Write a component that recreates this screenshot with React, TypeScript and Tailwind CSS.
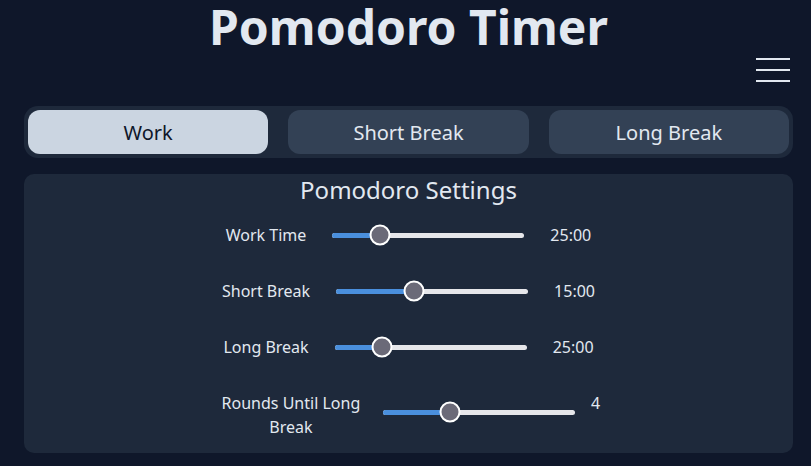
import { useState } from "react";

type Mode = "work" | "short" | "long";

interface SliderRowProps {
  label: string;
  value: string;
  thumb: number; // px from track start to thumb centre
}

function Slider({ thumb }: { thumb: number }) {
  return (
    <div className="relative h-5 w-[192px] shrink-0 flex items-center">
      <div className="h-[5px] w-full rounded-full bg-[#e6e6ea] overflow-hidden">
        <div className="h-full bg-[#4a8fdd]" style={{ width: thumb }} />
      </div>
      <div
        className="absolute top-1/2 h-[21px] w-[21px] -translate-x-1/2 -translate-y-1/2 rounded-full border-2 border-white bg-[#6b6a78]"
        style={{ left: thumb }}
      />
    </div>
  );
}

function SliderRow({ label, value, thumb }: SliderRowProps) {
  return (
    <div className="flex items-center justify-center gap-[26px] leading-6">
      <span>{label}</span>
      <Slider thumb={thumb} />
      <span>{value}</span>
    </div>
  );
}

export default function App() {
  const [mode, setMode] = useState<Mode>("work");

  const tabs: { id: Mode; label: string }[] = [
    { id: "work", label: "Work" },
    { id: "short", label: "Short Break" },
    { id: "long", label: "Long Break" },
  ];

  return (
    <div
      className="min-h-screen w-full bg-[#0f172a] pl-6 pr-[18px] text-[#e2e8f0]"
      style={{ fontFamily: '"Noto Sans", "Open Sans", sans-serif' }}
    >
      <h1 className="pt-[3px] text-center text-[48px] font-bold leading-[48px] text-[#e2e8f0]">
        Pomodoro Timer
      </h1>

      <div className="mt-[7px] flex justify-end pr-[3px]">
        <button className="flex flex-col gap-[9px]">
          <span className="block h-[2px] w-[34px] bg-[#e2e8f0]" />
          <span className="block h-[2px] w-[34px] bg-[#e2e8f0]" />
          <span className="block h-[2px] w-[34px] bg-[#e2e8f0]" />
        </button>
      </div>

      <div className="mt-6 flex gap-5 rounded-[14px] bg-[#1e293b] p-1">
        {tabs.map((t) => (
          <button
            key={t.id}
            onClick={() => setMode(t.id)}
            className={
              mode === t.id
                ? "h-11 flex-1 rounded-xl bg-[#cbd5e1] pt-[2px] text-xl text-[#0f172a]"
                : "h-11 flex-1 rounded-xl bg-[#334155] pt-[2px] text-xl text-[#e2e8f0]"
            }
          >
            {t.label}
          </button>
        ))}
      </div>

      <div className="mt-4 rounded-[10px] bg-[#1e293b] pb-[14px]">
        <h2 className="text-center text-2xl leading-8">Pomodoro Settings</h2>

        <div className="mt-[17px] flex flex-col gap-8 text-base">
          <SliderRow label="Work Time" value="25:00" thumb={48} />
          <SliderRow label="Short Break" value="15:00" thumb={78} />
          <SliderRow label="Long Break" value="25:00" thumb={47} />

          <div className="flex items-center justify-center pl-1 leading-6">
            <span className="w-[140px] text-center">Rounds Until Long Break</span>
            <div className="ml-[22px] mb-[6px]">
              <Slider thumb={67} />
            </div>
            <span className="ml-4 self-start">4</span>
          </div>
        </div>
      </div>
    </div>
  );
}
